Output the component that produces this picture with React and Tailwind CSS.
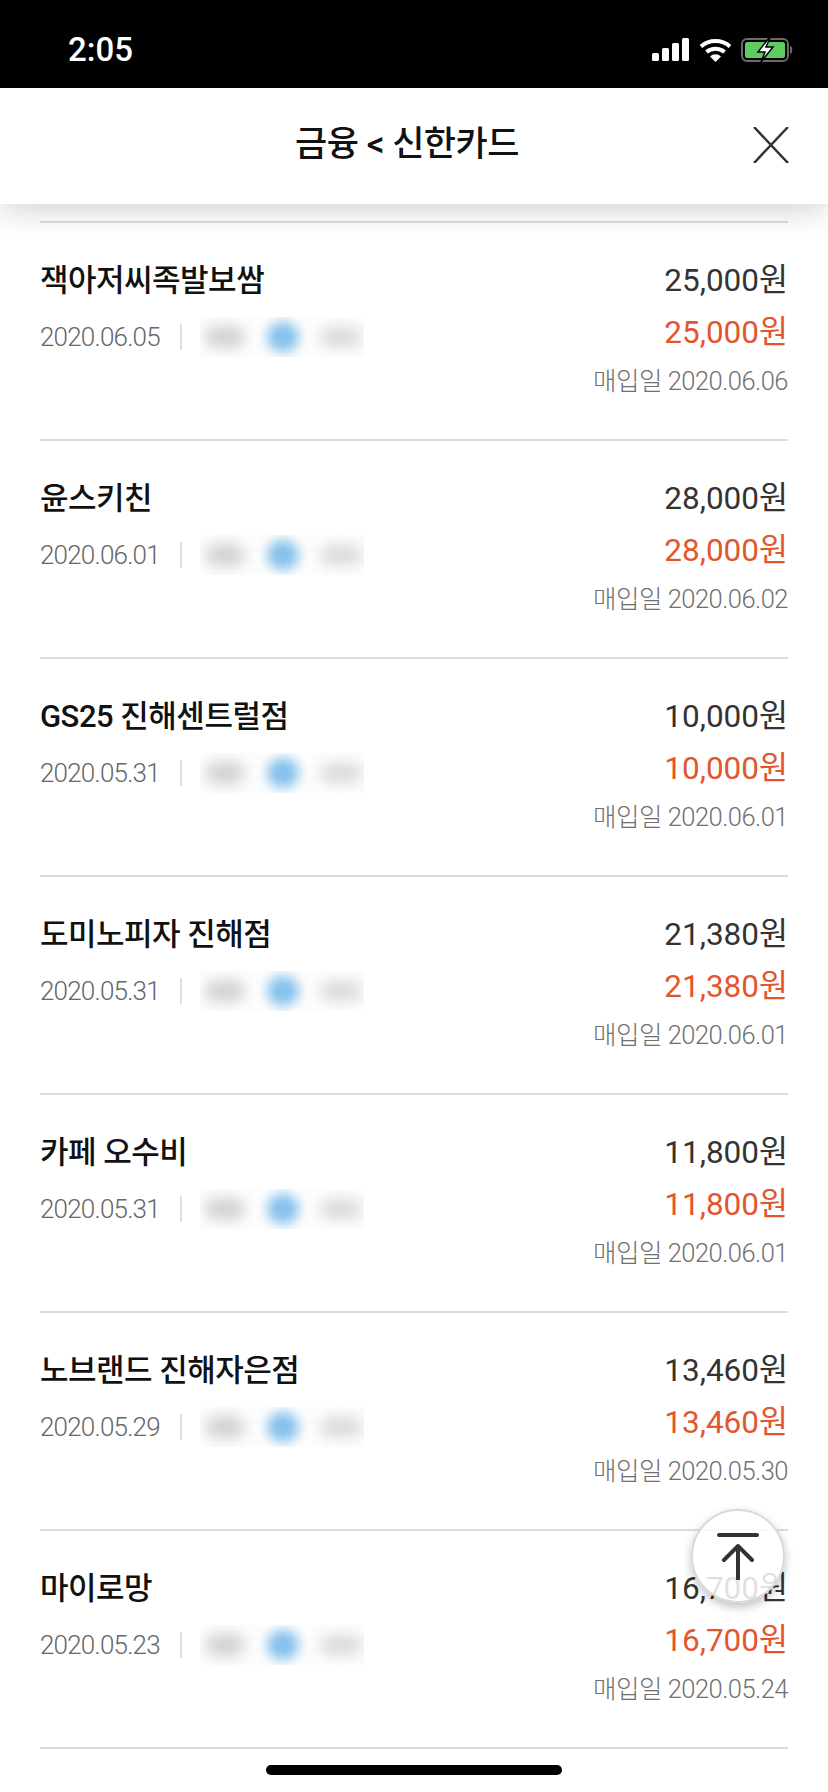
const rows = [
  { name: "잭아저씨족발보쌈", date: "2020.06.05", amount: "25,000원", bought: "2020.06.06" },
  { name: "윤스키친", date: "2020.06.01", amount: "28,000원", bought: "2020.06.02" },
  { name: "GS25 진해센트럴점", date: "2020.05.31", amount: "10,000원", bought: "2020.06.01" },
  { name: "도미노피자 진해점", date: "2020.05.31", amount: "21,380원", bought: "2020.06.01" },
  { name: "카페 오수비", date: "2020.05.31", amount: "11,800원", bought: "2020.06.01" },
  { name: "노브랜드 진해자은점", date: "2020.05.29", amount: "13,460원", bought: "2020.05.30" },
  { name: "마이로망", date: "2020.05.23", amount: "16,700원", bought: "2020.05.24" },
];

function StatusIcons() {
  return (
    <svg width="142" height="26" viewBox="0 0 142 26">
      <g fill="#fff">
        <rect x="0" y="16" width="7" height="8" rx="1.5" />
        <rect x="10" y="11" width="7" height="13" rx="1.5" />
        <rect x="20" y="6" width="7" height="18" rx="1.5" />
        <rect x="30" y="1" width="7" height="23" rx="1.5" />
      </g>
      <g fill="none" stroke="#fff" strokeWidth="4">
        <path d="M49 9.5a22 22 0 0 1 29 0" />
        <path d="M54.500 15a14 14 0 0 1 18 0" />
      </g>
      <path d="M63.500 25l-5.500-5.500a8 8 0 0 1 11 0z" fill="#fff" />
      <rect x="90" y="2" width="46" height="22" rx="5" fill="none" stroke="#6b6b6b" strokeWidth="2" />
      <rect x="93" y="5" width="40" height="16" rx="2.500" fill="#5fcb63" />
      <path d="M138 9c3 .5 3 7 0 8z" fill="#6b6b6b" />
      <path d="M117 1l-11 14h7l-4 10 12-15h-7l4-9z" fill="#fff" stroke="#000" strokeWidth="1.500" />
    </svg>
  );
}

function BlurredTags() {
  return (
    <div className="ml-[18px] flex h-[40px] w-[164px] items-center overflow-hidden bg-[#fdfdfd]">
      <div className="ml-[5px] h-[22px] w-[40px] rounded-full bg-[#d2d2d2] blur-[7px]" />
      <div className="ml-[22px] h-[30px] w-[32px] rounded-full bg-[#85c1ec] blur-[6px]" />
      <div className="ml-[21px] h-[20px] w-[42px] rounded-full bg-[#dadada] blur-[7px]" />
    </div>
  );
}

function Row({ row }) {
  return (
    <div className="flex h-[218px] justify-between border-t-2 border-[#dcdcdc] pt-[36px]">
      <div>
        <div className="text-[31px] leading-[44px] font-medium tracking-[-0.5px] text-[#111]">{row.name}</div>
        <div className="mt-[14px] flex items-center">
          <span className="w-[122px] text-[26px] leading-[40px] font-light tracking-[-0.8px] text-[#666]">{row.date}</span>
          <span className="ml-[18px] h-[26px] w-[2px] bg-[#e0e0e0]" />
          <BlurredTags />
        </div>
      </div>
      <div className="text-right">
        <div className="text-[31.5px] leading-[44px] text-[#333]">{row.amount}</div>
        <div className="mt-[8px] text-[31.5px] leading-[44px] text-[#e2562f]">{row.amount}</div>
        <div className="mt-[8px] text-[25.5px] leading-[36px] font-light tracking-[-0.5px] text-[#707070]">매입일 {row.bought}</div>
      </div>
    </div>
  );
}

export default function App() {
  return (
    <div className="relative h-[1792px] w-[828px] overflow-hidden bg-white font-['Roboto','Noto_Sans_CJK_KR',sans-serif]">
      <div className="flex h-[88px] items-center justify-between bg-black pt-[12px] pr-[34px] pl-[68px] text-white">
        <span className="text-[33px] font-medium">2:05</span>
        <StatusIcons />
      </div>
      <div className="relative z-10 flex h-[116px] items-center justify-center bg-white pr-[14px] pb-[2px] shadow-[0_6px_30px_rgba(0,0,0,0.18)]">
        <span className="text-[35px] font-medium tracking-[-0.5px] text-[#111]">금융 &lt; 신한카드</span>
        <svg className="absolute right-[39px]" width="36" height="36" viewBox="0 0 36 36" fill="none" stroke="#333" strokeWidth="2.500">
          <path d="M1 0l34 36M35 0L1 36" />
        </svg>
      </div>
      <div className="mt-[17px] px-[40px]">
        {rows.map((row) => (
          <Row key={row.name} row={row} />
        ))}
        <div className="border-t-2 border-[#dcdcdc]" />
      </div>
      <button className="absolute top-[1509px] left-[691px] flex h-[94px] w-[94px] items-center justify-center rounded-full border-2 border-[#d8d8d8] bg-white/85 shadow-[0_4px_10px_rgba(0,0,0,0.25)]">
        <svg width="44" height="48" viewBox="0 0 44 48" fill="none" stroke="#333" strokeWidth="4" strokeLinecap="round" strokeLinejoin="round">
          <path d="M3 3h38M22 14v33M8 28l14-14 14 14" />
        </svg>
      </button>
      <div className="absolute top-[1765px] left-[266px] h-[10px] w-[296px] rounded-full bg-black" />
    </div>
  );
}
